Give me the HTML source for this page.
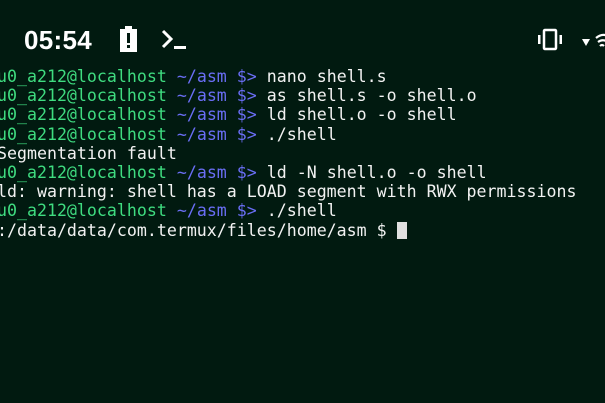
<!DOCTYPE html>
<html><head><style>
body{margin:0;width:605px;height:403px;background:#011a10;overflow:hidden;position:relative;font-family:"Liberation Sans",sans-serif}
.time{position:absolute;left:24px;top:25px;color:#fff;font-size:26px;font-weight:bold;letter-spacing:0.3px}
.term{position:absolute;left:-3px;top:67px;font-family:"DejaVu Sans Mono",monospace;font-size:16.6px;line-height:19.2px;color:#f2f2f2;white-space:pre}
.g{color:#3fdc80}.b{color:#6a6ef5}
.cur{display:inline-block;width:10px;height:17px;background:#e0e0e0;vertical-align:-3px}
</style></head><body>
<div class="time">05:54</div>
<svg style="position:absolute;left:118px;top:25px" width="22" height="28"><rect x="2" y="4" width="17" height="23" fill="#fff"/><rect x="7" y="1" width="7" height="4" fill="#fff"/><rect x="9" y="8" width="3" height="10" fill="#011a10"/><rect x="9" y="20" width="3" height="3" fill="#011a10"/></svg>
<svg style="position:absolute;left:160px;top:28px" width="30" height="24"><path d="M3 3 L11 11 L3 19" stroke="#fff" stroke-width="3" fill="none"/><rect x="14" y="18" width="12" height="3" fill="#fff"/></svg>
<svg style="position:absolute;left:538px;top:28px" width="30" height="24"><rect x="6" y="2" width="12" height="19" rx="1" stroke="#fff" stroke-width="2.5" fill="none"/><rect x="0" y="7" width="2.5" height="9" fill="#fff"/><rect x="21.5" y="7" width="2.5" height="9" fill="#fff"/></svg>
<svg style="position:absolute;left:580px;top:30px" width="25" height="22"><path d="M2 9 L10 9 L6 16Z" fill="#fff"/><path d="M16 8 Q22 3 28 6 M18 12 Q22 9 26 11 M20 16 Q22 14 24 16" stroke="#fff" stroke-width="2.2" fill="none"/></svg>
<div class="term"><span class="g">u0_a212@localhost</span> <span class="b">~/asm $&gt;</span> nano shell.s
<span class="g">u0_a212@localhost</span> <span class="b">~/asm $&gt;</span> as shell.s -o shell.o
<span class="g">u0_a212@localhost</span> <span class="b">~/asm $&gt;</span> ld shell.o -o shell
<span class="g">u0_a212@localhost</span> <span class="b">~/asm $&gt;</span> ./shell
Segmentation fault
<span class="g">u0_a212@localhost</span> <span class="b">~/asm $&gt;</span> ld -N shell.o -o shell
ld: warning: shell has a LOAD segment with RWX permissions
<span class="g">u0_a212@localhost</span> <span class="b">~/asm $&gt;</span> ./shell
:/data/data/com.termux/files/home/asm $ <span class="cur"></span></div>
</body></html>
